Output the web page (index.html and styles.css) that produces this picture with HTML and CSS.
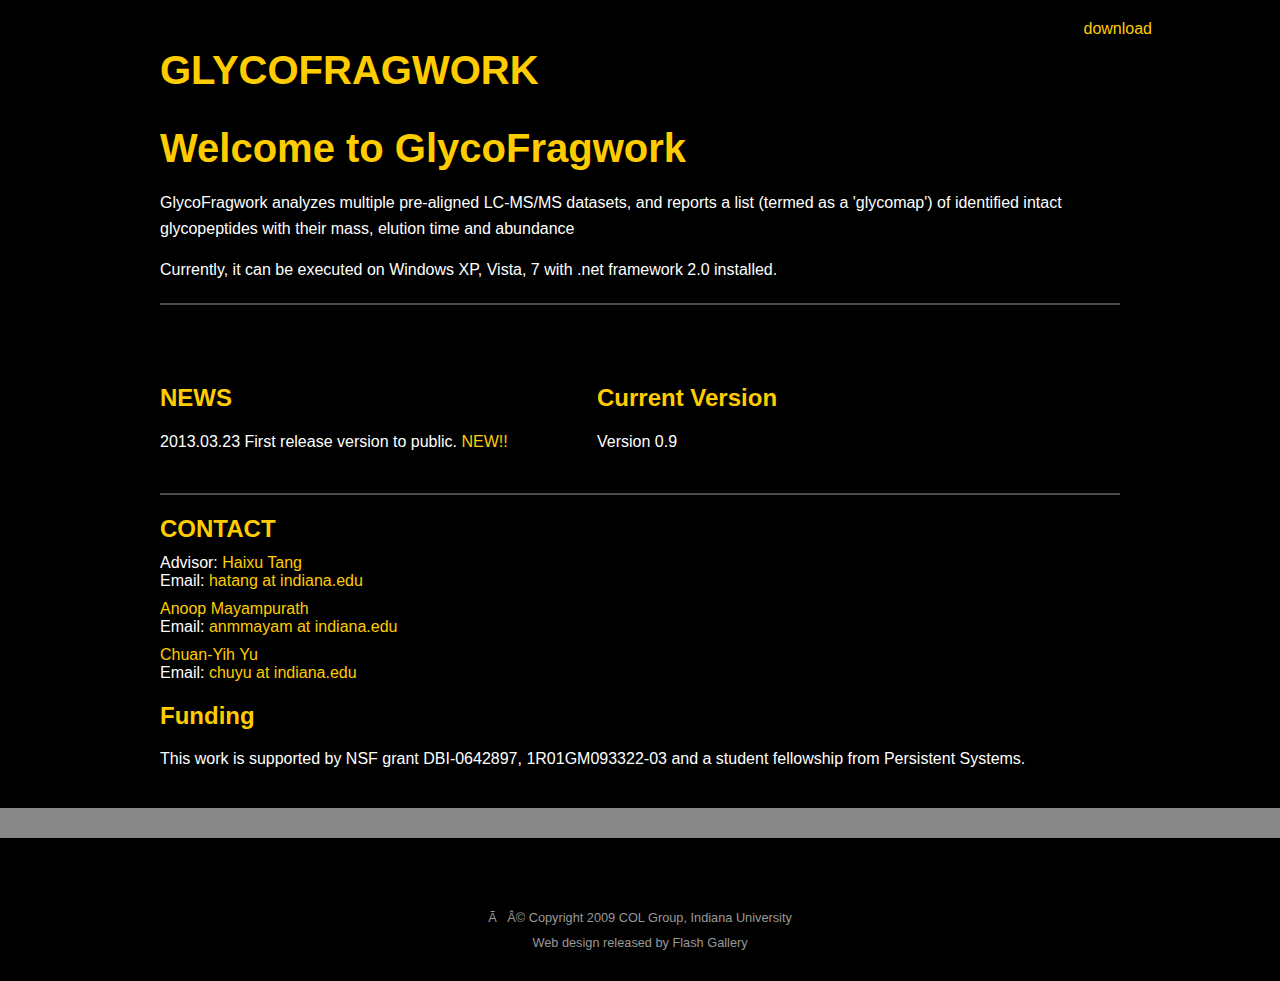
FILE: index.html
```html
<!DOCTYPE html>
<html lang="en">
<head>
<meta charset="utf-8">
<title>GlycoFragwork</title>
<link rel="stylesheet" href="styles.css">
</head>
<body>
<nav class="topnav"><a href="#" class="link">download</a></nav>
<div class="page">
  <h1 class="site-title">GLYCOFRAGWORK</h1>
  <h1 class="welcome">Welcome to GlycoFragwork</h1>
  <p class="text intro">GlycoFragwork analyzes multiple pre-aligned LC-MS/MS datasets, and reports a list (termed as a 'glycomap') of identified intact glycopeptides with their mass, elution time and abundance</p>
  <p class="text">Currently, it can be executed on Windows XP, Vista, 7 with .net framework 2.0 installed.</p>
  <hr class="rule rule-top">
  <div class="columns">
    <section>
      <h2 class="section-title">NEWS</h2>
      <p class="text">2013.03.23 First release version to public. <span class="hl">NEW!!</span></p>
    </section>
    <section>
      <h2 class="section-title">Current Version</h2>
      <p class="text">Version 0.9</p>
    </section>
  </div>
  <hr class="rule">
  <h2 class="section-title contact-title">CONTACT</h2>
  <div class="contact">Advisor: <a href="#" class="link">Haixu Tang</a><br>Email: <a href="#" class="link">hatang at indiana.edu</a></div>
  <div class="contact"><a href="#" class="link">Anoop Mayampurath</a><br>Email: <a href="#" class="link">anmmayam at indiana.edu</a></div>
  <div class="contact"><a href="#" class="link">Chuan-Yih Yu</a><br>Email: <a href="#" class="link">chuyu at indiana.edu</a></div>
  <h2 class="section-title funding-title">Funding</h2>
  <p class="text">This work is supported by NSF grant DBI-0642897, 1R01GM093322-03 and a student fellowship from Persistent Systems.</p>
</div>
<div class="band"></div>
<footer class="footer">
  <div>Ã&nbsp;&nbsp; Â© Copyright 2009 COL Group, Indiana University</div>
  <div>Web design released by Flash Gallery</div>
</footer>
</body>
</html>
```
FILE: styles.css
```css
html, body {
  margin: 0;
  padding: 0;
  background: #000;
}
body {
  font-family: "Liberation Sans", Arial, sans-serif;
  font-size: 16px;
  color: #fff;
}
.link, .hl {
  color: #ffcc00;
  text-decoration: none;
}
.topnav {
  display: flex;
  justify-content: flex-end;
  padding: 20px 128px 0 0;
  line-height: 18px;
}
.page {
  width: 960px;
  margin: 0 auto;
}
.site-title {
  margin: 9px 0 0;
  font-size: 40px;
  line-height: 46px;
  color: #ffcc00;
  font-weight: bold;
}
.welcome {
  margin: 32px 0 0;
  font-size: 40px;
  line-height: 46px;
  color: #ffcc00;
  font-weight: bold;
}
.text {
  margin: 0;
  line-height: 26px;
}
.intro {
  margin: 19px 0 15px;
}
.rule {
  border: 0;
  height: 2px;
  background: #4a4a4a;
  margin: 0;
}
.rule-top {
  margin-top: 20px;
}
.columns {
  display: grid;
  grid-template-columns: 437px 1fr;
  padding: 79px 0 38px;
}
.section-title {
  margin: 0 0 17px;
  font-size: 24px;
  line-height: 28px;
  color: #ffcc00;
  font-weight: bold;
}
.contact-title {
  margin: 20px 0 11px;
}
.contact {
  line-height: 18px;
  margin-bottom: 10px;
}
.funding-title {
  margin: 20px 0 16px;
}
.band {
  height: 30px;
  background: #888;
  margin-top: 36px;
}
.footer {
  padding: 67px 0 27px;
  text-align: center;
  font-size: 12.75px;
  line-height: 25px;
  color: #999;
}
```
